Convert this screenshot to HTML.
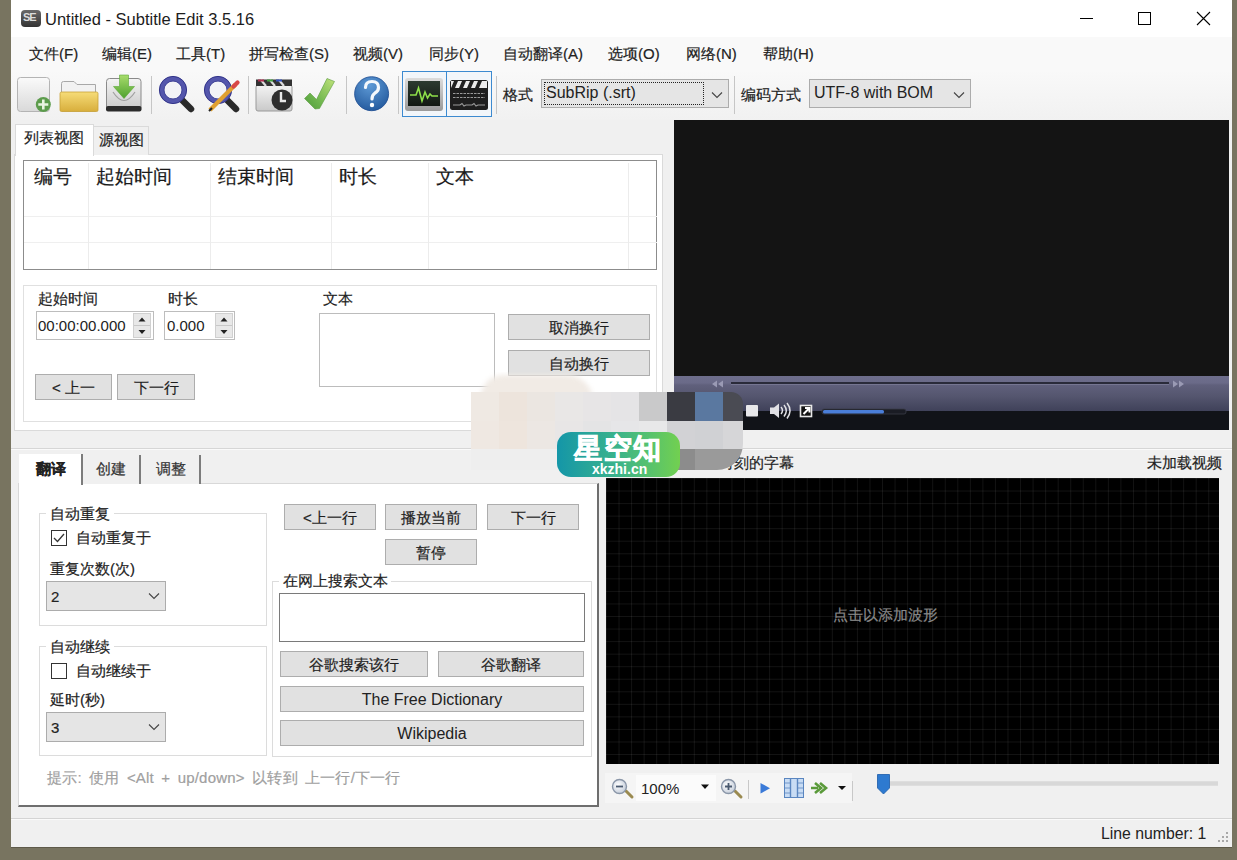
<!DOCTYPE html>
<html><head><meta charset="utf-8">
<style>
html,body{margin:0;padding:0;}
body{width:1237px;height:860px;position:relative;overflow:hidden;background:#787460;font-family:"Liberation Sans",sans-serif;color:#222;}
.a{position:absolute;box-sizing:border-box;}
.t{position:absolute;white-space:nowrap;line-height:1;-webkit-text-stroke:0.2px currentColor;}
.nl{-webkit-text-stroke:0 !important;}
.btn{position:absolute;box-sizing:border-box;background:#e1e1e1;border:1px solid #adadad;text-align:center;font-size:15px;white-space:nowrap;-webkit-text-stroke:0.2px currentColor;color:#1e1e1e;}
.cmb{position:absolute;box-sizing:border-box;background:#e5e5e5;border:1px solid #acacac;font-size:15px;white-space:nowrap;}
.grp{position:absolute;box-sizing:border-box;border:1px solid #dcdcdc;}
.sep{position:absolute;width:1px;background:#c8c8c8;}
</style></head><body>
<!-- window -->
<div class="a" id="win" style="left:11px;top:0;width:1221px;height:848px;background:#f0f0f0;border-bottom:1px solid #5e5a4a;"></div>
<!-- title bar -->
<div class="a" style="left:11px;top:0;width:1221px;height:37px;background:#fff;"></div>
<!-- menu bar -->
<div class="a" style="left:11px;top:37px;width:1221px;height:33px;background:#f9f9f9;"></div>
<!-- toolbar -->
<div class="a" style="left:11px;top:70px;width:1221px;height:50px;background:linear-gradient(#f9f9f9,#f1f1f1);"></div>


<!-- title content -->

<div class="a" style="left:21px;top:10px;width:20px;height:17px;background:linear-gradient(#6a6a6a,#333);border-radius:4px;"></div>
<div class="t nl" style="left:23px;top:12px;font-size:11px;font-weight:bold;color:#ddd;letter-spacing:-1px;">SE</div>
<div class="t nl" id="ttl" style="left:45px;top:11px;font-size:16.5px;color:#1c1c1c;">Untitled - Subtitle Edit 3.5.16</div>
<div class="a" style="left:1080px;top:18px;width:13px;height:1px;background:#000;"></div>
<div class="a" style="left:1138px;top:12px;width:13px;height:13px;border:1px solid #000;"></div>
<svg class="a" style="left:1196px;top:11px" width="15" height="15"><path d="M1 1L14 14M14 1L1 14" stroke="#000" stroke-width="1.1"/></svg>
<!-- menu -->
<div class="t" style="left:29px;top:46px;font-size:15px;">文件(F)</div>
<div class="t" style="left:102px;top:46px;font-size:15px;">编辑(E)</div>
<div class="t" style="left:176px;top:46px;font-size:15px;">工具(T)</div>
<div class="t" style="left:249px;top:46px;font-size:15px;">拼写检查(S)</div>
<div class="t" style="left:353px;top:46px;font-size:15px;">视频(V)</div>
<div class="t" style="left:429px;top:46px;font-size:15px;">同步(Y)</div>
<div class="t" style="left:503px;top:46px;font-size:15px;">自动翻译(A)</div>
<div class="t" style="left:608px;top:46px;font-size:15px;">选项(O)</div>
<div class="t" style="left:686px;top:46px;font-size:15px;">网络(N)</div>
<div class="t" style="left:763px;top:46px;font-size:15px;">帮助(H)</div>


<!-- toolbar icons -->
<svg class="a" style="left:0;top:0" width="1237" height="125">
<defs>
<linearGradient id="gdoc" x1="0" y1="0" x2="0" y2="1"><stop offset="0" stop-color="#fafafa"/><stop offset="1" stop-color="#d9d9d9"/></linearGradient>
<linearGradient id="gfold" x1="0" y1="0" x2="0" y2="1"><stop offset="0" stop-color="#f6dc78"/><stop offset="1" stop-color="#d8ae3c"/></linearGradient>
<linearGradient id="gbox" x1="0" y1="0" x2="0" y2="1"><stop offset="0" stop-color="#f4f4f4"/><stop offset="1" stop-color="#c9c9c9"/></linearGradient>
<linearGradient id="garr" x1="0" y1="0" x2="0" y2="1"><stop offset="0" stop-color="#a8dc6c"/><stop offset="1" stop-color="#4ea12e"/></linearGradient>
<linearGradient id="gchk" x1="1" y1="0" x2="0" y2="1"><stop offset="0" stop-color="#c0e27a"/><stop offset="0.6" stop-color="#72b850"/><stop offset="1" stop-color="#4e9a3a"/></linearGradient>
<radialGradient id="ghelp" cx="0.45" cy="0.25" r="0.8"><stop offset="0" stop-color="#5e9ad6"/><stop offset="1" stop-color="#22589c"/></radialGradient>
<linearGradient id="gmon" x1="0" y1="0" x2="0" y2="1"><stop offset="0" stop-color="#dcdcdc"/><stop offset="1" stop-color="#9a9a9a"/></linearGradient>
<linearGradient id="gscr" x1="0" y1="0" x2="0" y2="1"><stop offset="0" stop-color="#2c3a30"/><stop offset="1" stop-color="#121812"/></linearGradient>
</defs>
<!-- new doc -->
<rect x="17.5" y="77.5" width="32" height="34" rx="3" fill="url(#gdoc)" stroke="#b4b4b4"/>
<circle cx="43.3" cy="104.5" r="7.5" fill="#5c9c4c"/>
<path d="M43.3 99.5V109.5M38.3 104.5H48.3" stroke="#e8f4e0" stroke-width="2.6"/>
<!-- folder -->
<path d="M61.5 111V83.5Q61.5 81.5 63.5 81.5H74L77 84.5H95.5V111Z" fill="#f2f2f2" stroke="#a8a8a8"/>
<rect x="60" y="92" width="38" height="19.5" rx="1.5" fill="url(#gfold)" stroke="#c9a238" stroke-width="0.8"/>
<!-- download -->
<rect x="106.5" y="78.5" width="34.5" height="32" rx="3" fill="url(#gbox)" stroke="#8a8a8a"/>
<rect x="106" y="106" width="35.5" height="5.5" rx="2" fill="#2c2c2c"/>
<path d="M113 92Q124 109 135 92" fill="none" stroke="#a0a0a0" stroke-width="1.2"/>
<path d="M119.5 75H128.5V86.5H134.5L124 98.5L113.5 86.5H119.5Z" fill="url(#garr)" stroke="#5aa838" stroke-width="0.6"/>
<!-- magnifier -->
<path d="M181 99L191 109" stroke="#2a2a2a" stroke-width="6.5" stroke-linecap="round"/>
<circle cx="173" cy="90" r="11.3" fill="#f2f2f6" stroke="#5456ac" stroke-width="5"/>
<circle cx="173" cy="90" r="13.6" fill="none" stroke="#34368a" stroke-width="1"/><circle cx="173" cy="90" r="9" fill="none" stroke="#3a3c90" stroke-width="0.8"/>
<!-- magnifier + pencil -->
<path d="M226 99L236 109" stroke="#2a2a2a" stroke-width="6.5" stroke-linecap="round"/>
<circle cx="218" cy="90" r="11.3" fill="#f2f2f6" stroke="#5456ac" stroke-width="5"/>
<circle cx="218" cy="90" r="13.6" fill="none" stroke="#34368a" stroke-width="1"/><circle cx="218" cy="90" r="9" fill="none" stroke="#3a3c90" stroke-width="0.8"/>
<path d="M210 110L235.5 84.5" stroke="#e0a030" stroke-width="4.2"/>
<path d="M233.5 86.5L237.5 82.5" stroke="#d84848" stroke-width="4.2" stroke-linecap="round"/>
<path d="M209 111L212 108" stroke="#222" stroke-width="2"/>
<!-- clapper clock -->
<rect x="256" y="85" width="36" height="26" rx="2" fill="url(#gbox)" stroke="#9a9a9a"/>
<path d="M256 79.5H292V86H256Z" fill="#333"/>
<path d="M261 80L266 86M270 80L275 86M279 80L284 86" stroke="#ddd" stroke-width="2.2"/>
<path d="M259 80H266M268 80H275M277 80H284" stroke="#c0304a" stroke-width="0"/>
<rect x="258" y="79.5" width="6" height="2" fill="#b03050"/><rect x="267" y="79.5" width="6" height="2" fill="#40a040"/><rect x="276" y="79.5" width="6" height="2" fill="#3050c0"/>
<circle cx="282" cy="100" r="10.5" fill="#2e2e2e"/>
<path d="M281 92V101H286" stroke="#e8e8e8" stroke-width="2.4" fill="none"/>
<!-- check -->
<path d="M327 78.5L334.5 81.5L319.5 108.5L315 109L304.5 98.5L310 93L316.5 99.5Z" fill="url(#gchk)" stroke="#5a9a40" stroke-width="0.6" stroke-linejoin="round"/>
<!-- help -->
<circle cx="371.6" cy="93.7" r="17" fill="url(#ghelp)" stroke="#1a4a90" stroke-width="0.8"/>
<path d="M365.5 87.5Q365.5 81.5 372 81.5Q378.5 81.5 378.5 87.5Q378.5 91 375 93Q372 95 372 99" stroke="#f4f8fc" stroke-width="3.2" fill="none" stroke-linecap="round"/>
<circle cx="372" cy="105" r="2.2" fill="#fff"/>
<!-- pressed buttons -->
<rect x="402.5" y="71.5" width="89" height="45" fill="#f2f6fa" stroke="#3c8ad0"/>
<path d="M446.5 71V117" stroke="#3c8ad0"/>
<rect x="405" y="78" width="38" height="33" rx="3" fill="url(#gmon)"/>
<rect x="408" y="81" width="32" height="25" fill="url(#gscr)"/>
<path d="M410 95H416L418.5 88L422 101L425 92L427.5 98L430 94L432 96H438" stroke="#8ee04a" stroke-width="1.6" fill="none"/>
<rect x="450" y="80" width="38" height="30" rx="2.5" fill="#1e1e1e"/>
<rect x="451" y="81" width="36" height="7" fill="#ececec"/>
<path d="M454 81H458L455 88H451Z M462 81H466L463 88H459Z M470 81H474L471 88H467Z M478 81H482L479 88H475Z" fill="#222"/>
<path d="M453 93.5H485M453 97.5H485" stroke="#9a9a9a" stroke-width="1.2" stroke-dasharray="2.5 1"/>
<path d="M453 105H460L462 103.5L464 106L466 105H472L474 103.5L476 106L478 105H485" stroke="#9a9a9a" stroke-width="1.1" fill="none"/>
<!-- separators -->
<path d="M151.5 76V114M248.5 76V114M346.5 76V114M398.5 76V114M496.5 76V114M734.5 76V114" stroke="#c6c6c6"/>
</svg>
<div class="t" style="left:503px;top:87px;font-size:15px;">格式</div>
<div class="cmb" style="left:541px;top:79px;width:188px;height:29px;"></div>
<div class="a" style="left:544px;top:82px;width:160px;height:23px;border:1px dotted #222;"></div>
<div class="t nl" style="left:546px;top:85px;font-size:16px;color:#222;">SubRip (.srt)</div>
<svg class="a" style="left:711px;top:91px" width="12" height="8"><path d="M1 1.5L6 6.5L11 1.5" stroke="#444" fill="none" stroke-width="1.1"/></svg>
<div class="t" style="left:741px;top:87px;font-size:15px;">编码方式</div>
<div class="cmb" style="left:809px;top:79px;width:162px;height:29px;"></div>
<div class="t nl" style="left:814px;top:85px;font-size:16px;color:#222;">UTF-8 with BOM</div>
<svg class="a" style="left:953px;top:91px" width="12" height="8"><path d="M1 1.5L6 6.5L11 1.5" stroke="#444" fill="none" stroke-width="1.1"/></svg>

<!-- top tabs area -->
<div class="a" style="left:14px;top:154px;width:649px;height:277px;background:#fff;border:1px solid #dadada;"></div>
<div class="a" style="left:93px;top:126px;width:56px;height:29px;background:#f0f0f0;border:1px solid #dadada;border-bottom:none;"></div>
<div class="t" style="left:99px;top:132px;font-size:15px;">源视图</div>
<div class="a" style="left:15px;top:124px;width:79px;height:32px;background:#fff;border:1px solid #dadada;border-bottom:none;"></div>
<div class="t" style="left:24px;top:130px;font-size:15px;">列表视图</div>
<!-- list view -->
<div class="a" style="left:23px;top:160px;width:634px;height:110px;background:#fff;border:1px solid #8c8c8c;"></div>
<div class="a" style="left:24px;top:216px;width:633px;height:1px;background:#efefef;"></div>
<div class="a" style="left:24px;top:242px;width:633px;height:1px;background:#efefef;"></div>
<div class="a" style="left:88px;top:163px;width:1px;height:106px;background:#ececec;"></div>
<div class="a" style="left:210px;top:163px;width:1px;height:106px;background:#ececec;"></div>
<div class="a" style="left:331px;top:163px;width:1px;height:106px;background:#ececec;"></div>
<div class="a" style="left:428px;top:163px;width:1px;height:106px;background:#ececec;"></div>
<div class="a" style="left:628px;top:163px;width:1px;height:106px;background:#ececec;"></div>
<div class="t" style="left:34px;top:168px;font-size:18.5px;color:#1a1a1a;">编号</div>
<div class="t" style="left:96px;top:168px;font-size:18.5px;color:#1a1a1a;">起始时间</div>
<div class="t" style="left:218px;top:168px;font-size:18.5px;color:#1a1a1a;">结束时间</div>
<div class="t" style="left:339px;top:168px;font-size:18.5px;color:#1a1a1a;">时长</div>
<div class="t" style="left:436px;top:168px;font-size:18.5px;color:#1a1a1a;">文本</div>
<!-- edit panel -->
<div class="a" style="left:23px;top:285px;width:634px;height:137px;background:#fff;border:1px solid #e0e0e0;"></div>
<div class="t" style="left:38px;top:291px;font-size:15px;">起始时间</div>
<div class="t" style="left:168px;top:291px;font-size:15px;">时长</div>
<div class="t" style="left:323px;top:291px;font-size:15px;">文本</div>
<div class="a" style="left:36px;top:311px;width:118px;height:29px;background:#fff;border:1px solid #bdbdbd;"></div>
<div class="t nl" style="left:38px;top:318px;font-size:15px;color:#222;">00:00:00.000</div>
<div class="a" style="left:133px;top:313px;width:18px;height:25px;background:#e8e8e8;border:1px solid #d0d0d0;"></div>
<div class="a" style="left:164px;top:311px;width:71px;height:29px;background:#fff;border:1px solid #bdbdbd;"></div>
<div class="t nl" style="left:167px;top:318px;font-size:15px;color:#222;">0.000</div>
<div class="a" style="left:215px;top:313px;width:18px;height:25px;background:#e8e8e8;border:1px solid #d0d0d0;"></div>
<svg class="a" style="left:0;top:300px" width="240" height="50">
<path d="M138.5 21.5L142 17.5L145.5 21.5Z M138.5 30L142 34L145.5 30Z M220.5 21.5L224 17.5L227.5 21.5Z M220.5 30L224 34L227.5 30Z" fill="#222"/>
<path d="M134 25.5H150M216 25.5H232" stroke="#c8c8c8"/>
</svg>
<div class="a" style="left:319px;top:313px;width:176px;height:74px;background:#fff;border:1px solid #bcbcbc;"></div>
<div class="btn" style="left:508px;top:314px;width:142px;height:26px;line-height:26px;">取消换行</div>
<div class="btn" style="left:508px;top:350px;width:142px;height:26px;line-height:26px;">自动换行</div>
<div class="btn" style="left:35px;top:374px;width:77px;height:26px;line-height:26px;">&lt; 上一</div>
<div class="btn" style="left:117px;top:374px;width:78px;height:26px;line-height:26px;">下一行</div>


<!-- video panel -->
<div class="a" style="left:674px;top:120px;width:555px;height:310px;background:#141414;"></div>
<div class="a" style="left:674px;top:376px;width:555px;height:36px;background:linear-gradient(#6e6e8c 0px,#6a6a88 7px,#60607c 9px,#55566f 20px,#3e4058 36px);"></div>
<div class="a" style="left:674px;top:411px;width:555px;height:19px;background:#111318;"></div>
<div class="a" style="left:731px;top:382px;width:438px;height:3px;background:#2a2b3a;border-bottom:1px solid #767692;"></div>
<svg class="a" style="left:700px;top:378px" width="520" height="45">
<path d="M12 6L17 2.5V9.5Z M18 6L23 2.5V9.5Z" fill="#9a9ab4"/>
<path d="M473 2.5L478 6L473 9.5Z M479 2.5L484 6L479 9.5Z" fill="#9a9ab4"/>
<rect x="46" y="27" width="12" height="11.5" fill="#e8e8ea" rx="1"/>
<path d="M70 29.5H74L79 25.5V40L74 36H70Z" fill="#e0e0e4"/>
<path d="M81 29Q84 32.5 81 36M84 27Q88.5 32.5 84 38.5M87 25Q93 32.5 87 40.5" stroke="#e0e0e4" stroke-width="1.5" fill="none"/>
<rect x="100.5" y="27.5" width="11" height="11" fill="#111" stroke="#e8e8e8" stroke-width="1.6"/>
<path d="M103.5 36L109 30.5M105 30H109.5V34.5" stroke="#fff" stroke-width="2" fill="none"/>
<rect x="122" y="31" width="84" height="5" rx="2" fill="#1a1c24" stroke="#3a3c48" stroke-width="0.8"/>
<rect x="123" y="32" width="61" height="3.5" rx="1.5" fill="#4a7ed8"/>
</svg>

<!-- lower tab page -->
<div class="a" style="left:11px;top:448px;width:1221px;height:1px;background:#d6d6d6;"></div>
<div class="a" style="left:11px;top:449px;width:1221px;height:1px;background:#fafafa;"></div>
<div class="a" style="left:18px;top:483px;width:581px;height:324px;background:#fff;border:1px solid #d8d8d8;border-right:2px solid #6e6e6e;border-bottom:2px solid #6e6e6e;"></div>
<div class="a" style="left:83px;top:455px;width:58px;height:29px;background:#f0f0f0;border-right:2px solid #7c7c7c;"></div>
<div class="a" style="left:141px;top:455px;width:60px;height:29px;background:#f0f0f0;border-right:2px solid #7c7c7c;"></div>
<div class="a" style="left:19px;top:454px;width:64px;height:31px;background:#fff;border-right:2px solid #7c7c7c;"></div>
<div class="t" style="left:36px;top:461px;font-size:15px;font-weight:bold;color:#222;">翻译</div>
<div class="t" style="left:96px;top:461px;font-size:15px;color:#333;">创建</div>
<div class="t" style="left:156px;top:461px;font-size:15px;color:#333;">调整</div>
<!-- group auto repeat -->
<div class="grp" style="left:39px;top:513px;width:228px;height:113px;"></div>
<div class="a" style="left:46px;top:506px;width:68px;height:14px;background:#fff;"></div>
<div class="t" style="left:50px;top:506px;font-size:15px;color:#222;">自动重复</div>
<div class="a" style="left:51px;top:530px;width:16px;height:16px;border:1px solid #333;background:#fff;"></div>
<svg class="a" style="left:51px;top:530px" width="16" height="16"><path d="M3 8L6.5 11.5L13 4" stroke="#333" stroke-width="1.3" fill="none"/></svg>
<div class="t" style="left:76px;top:530px;font-size:15px;color:#222;">自动重复于</div>
<div class="t" style="left:50px;top:561px;font-size:15px;color:#222;">重复次数(次)</div>
<div class="cmb" style="left:46px;top:581px;width:120px;height:30px;"></div>
<div class="t" style="left:51px;top:589px;font-size:15px;color:#222;">2</div>
<svg class="a" style="left:148px;top:592px" width="12" height="8"><path d="M1 1.5L6 6.5L11 1.5" stroke="#444" fill="none" stroke-width="1.1"/></svg>
<!-- group auto continue -->
<div class="grp" style="left:39px;top:646px;width:228px;height:110px;"></div>
<div class="a" style="left:46px;top:639px;width:68px;height:14px;background:#fff;"></div>
<div class="t" style="left:50px;top:639px;font-size:15px;color:#222;">自动继续</div>
<div class="a" style="left:51px;top:663px;width:16px;height:16px;border:1px solid #333;background:#fff;"></div>
<div class="t" style="left:76px;top:663px;font-size:15px;color:#222;">自动继续于</div>
<div class="t" style="left:50px;top:692px;font-size:15px;color:#222;">延时(秒)</div>
<div class="cmb" style="left:46px;top:712px;width:120px;height:30px;"></div>
<div class="t" style="left:51px;top:720px;font-size:15px;color:#222;">3</div>
<svg class="a" style="left:148px;top:723px" width="12" height="8"><path d="M1 1.5L6 6.5L11 1.5" stroke="#444" fill="none" stroke-width="1.1"/></svg>
<div class="t" style="left:47px;top:770px;font-size:15px;color:#a0a0a0;word-spacing:3px;letter-spacing:0.2px;">提示: 使用 &lt;Alt + up/down&gt; 以转到 上一行/下一行</div>
<!-- right side buttons -->
<div class="btn" style="left:284px;top:504px;width:92px;height:26px;line-height:26px;">&lt;上一行</div>
<div class="btn" style="left:385px;top:504px;width:92px;height:26px;line-height:26px;">播放当前</div>
<div class="btn" style="left:487px;top:504px;width:92px;height:26px;line-height:26px;">下一行</div>
<div class="btn" style="left:385px;top:539px;width:92px;height:26px;line-height:26px;">暂停</div>
<div class="grp" style="left:272px;top:581px;width:320px;height:176px;"></div>
<div class="a" style="left:279px;top:574px;width:112px;height:14px;background:#fff;"></div>
<div class="t" style="left:283px;top:573px;font-size:15px;color:#222;">在网上搜索文本</div>
<div class="a" style="left:279px;top:593px;width:306px;height:49px;background:#fff;border:1px solid #7a7a7a;"></div>
<div class="btn" style="left:280px;top:651px;width:148px;height:26px;line-height:26px;">谷歌搜索该行</div>
<div class="btn" style="left:438px;top:651px;width:146px;height:26px;line-height:26px;">谷歌翻译</div>
<div class="btn nl" style="left:280px;top:686px;width:304px;height:26px;line-height:26px;font-size:16px;color:#222;">The Free Dictionary</div>
<div class="btn nl" style="left:280px;top:720px;width:304px;height:26px;line-height:26px;font-size:16px;color:#222;">Wikipedia</div>

<!-- waveform -->
<div class="a" style="left:606px;top:478px;width:613px;height:286px;background-color:#000;background-image:linear-gradient(90deg,rgba(255,255,255,0.075) 1px,transparent 1px),linear-gradient(rgba(255,255,255,0.075) 1px,transparent 1px);background-size:12.55px 12.55px;background-position:0px 0px;"></div>
<div class="t" style="left:833px;top:607px;font-size:15px;color:#8a8a8a;">点击以添加波形</div>
<div class="t" style="left:659px;top:455px;font-size:15px;color:#222;">显示当前时刻的字幕</div>
<div class="t" style="left:1147px;top:455px;font-size:15px;color:#222;">未加载视频</div>
<!-- waveform toolbar -->
<div class="a" style="left:605px;top:773px;width:247px;height:30px;background:#f5f5f5;"></div>
<div class="a" style="left:636px;top:775px;width:80px;height:26px;background:#fbfbfb;"></div>
<svg class="a" style="left:600px;top:770px" width="630" height="40">
<defs><radialGradient id="gzm" cx="0.4" cy="0.4" r="0.6"><stop offset="0" stop-color="#fff"/><stop offset="1" stop-color="#c8d0dc"/></radialGradient></defs>
<path d="M26 21L32 27" stroke="#9a8a50" stroke-width="3" stroke-linecap="round"/>
<circle cx="19.5" cy="16.5" r="7" fill="url(#gzm)" stroke="#8a96a8" stroke-width="1.4"/>
<path d="M16 16.5H23" stroke="#4a5a70" stroke-width="1.8"/>
<path d="M101 14.5H109L105 19Z" fill="#111"/>
<path d="M135 21L141 27" stroke="#9a8a50" stroke-width="3" stroke-linecap="round"/>
<circle cx="128.5" cy="16.5" r="7" fill="url(#gzm)" stroke="#8a96a8" stroke-width="1.4"/>
<path d="M125 16.5H132M128.5 13V20" stroke="#4a5a70" stroke-width="1.8"/>
<path d="M148.5 10V29" stroke="#c8c8c8"/>
<path d="M160.5 13L170 18.3L160.5 23.6Z" fill="#3a7ad8"/>
<rect x="184.5" y="8.5" width="19" height="19" fill="#c8dcf4" stroke="#5a86c0"/>
<path d="M190.5 8.5V27.5M197.5 8.5V27.5" stroke="#5a86c0" stroke-width="1.4"/>
<path d="M184.5 13H190.5M184.5 18H190.5M184.5 23H190.5M197.5 13H203.5M197.5 18H203.5M197.5 23H203.5" stroke="#5a86c0" stroke-width="0.8"/>
<path d="M211 18H218M215 13L221 18L215 23M220 13L226 18L220 23" stroke="#5a9a3a" stroke-width="2.6" fill="none"/>
<path d="M238 16H246L242 20Z" fill="#111"/>
<path d="M252.5 11V31" stroke="#c8c8c8"/>
<rect x="290" y="11" width="1" height="1" fill="none"/>
<path d="M290 13.5H618" stroke="#d8d8d8" stroke-width="4.5"/>
<path d="M277.5 4.5H289.5V18L283.5 24L277.5 18Z" fill="#2e7ad0" stroke="#1a5aa8" stroke-width="0.8"/>
</svg>
<div class="t nl" style="left:641px;top:781px;font-size:15px;color:#222;">100%</div>
<!-- status bar -->
<div class="a" style="left:11px;top:818px;width:1221px;height:1px;background:#d4d4d4;"></div>
<div class="a" style="left:11px;top:819px;width:1221px;height:1px;background:#fafafa;"></div>
<div class="t nl" style="left:1101px;top:826px;font-size:15.8px;color:#222;">Line number: 1</div>
<svg class="a" style="left:1215px;top:830px" width="16" height="16">
<g fill="#a8a8a8"><rect x="11" y="2" width="2" height="2"/><rect x="7" y="6" width="2" height="2"/><rect x="11" y="6" width="2" height="2"/><rect x="3" y="10" width="2" height="2"/><rect x="7" y="10" width="2" height="2"/><rect x="11" y="10" width="2" height="2"/></g>
</svg>


<!-- mosaic overlay -->
<div class="a" style="left:471px;top:372px;width:272px;height:98px;border-radius:0 0 26px 0;overflow:hidden;">
<div class="a" style="left:10px;top:3px;width:112px;height:30px;background:#f1ebe5;border-radius:22px 26px 0 0;filter:blur(2.5px);"></div>
<div class="a" style="left:0;top:20px;width:28px;height:29px;background:#efe9e3;"></div>
<div class="a" style="left:28px;top:20px;width:28px;height:29px;background:#ede4dc;"></div>
<div class="a" style="left:56px;top:20px;width:28px;height:29px;background:#ebe6e1;"></div>
<div class="a" style="left:84px;top:20px;width:28px;height:29px;background:#e9e7e6;"></div>
<div class="a" style="left:112px;top:20px;width:28px;height:29px;background:#e7e5e6;"></div>
<div class="a" style="left:140px;top:20px;width:28px;height:29px;background:#e5e4e6;"></div>
<div class="a" style="left:168px;top:20px;width:28px;height:29px;background:#c9c9ca;"></div>
<div class="a" style="left:196px;top:20px;width:28px;height:29px;background:#3a3b42;"></div>
<div class="a" style="left:224px;top:20px;width:28px;height:29px;background:#5a78a0;"></div>
<div class="a" style="left:252px;top:20px;width:20px;height:29px;background:#4a4b53;border-top-right-radius:12px;"></div>
<div class="a" style="left:0;top:49px;width:28px;height:28px;background:#efe8e2;"></div>
<div class="a" style="left:28px;top:49px;width:28px;height:28px;background:#eee5dd;"></div>
<div class="a" style="left:56px;top:49px;width:28px;height:28px;background:#ece7e3;"></div>
<div class="a" style="left:84px;top:49px;width:28px;height:28px;background:#e8e6e6;"></div>
<div class="a" style="left:112px;top:49px;width:28px;height:28px;background:#e4e4e5;"></div>
<div class="a" style="left:140px;top:49px;width:28px;height:28px;background:#e6e6e8;"></div>
<div class="a" style="left:168px;top:49px;width:28px;height:28px;background:#e8e8e9;"></div>
<div class="a" style="left:196px;top:49px;width:28px;height:28px;background:#d2d2d5;"></div>
<div class="a" style="left:224px;top:49px;width:28px;height:28px;background:#d0d1d4;"></div>
<div class="a" style="left:252px;top:49px;width:20px;height:28px;background:#d6d6d8;"></div>
<div class="a" style="left:0;top:77px;width:196px;height:21px;background:#eeeeee;"></div>
<div class="a" style="left:196px;top:77px;width:28px;height:21px;background:#8c8c8c;"></div>
<div class="a" style="left:224px;top:77px;width:48px;height:21px;background:#9a9a9a;"></div>
</div>
<!-- watermark -->
<div class="a" style="left:557px;top:432px;width:123px;height:45px;border-radius:14px;background:linear-gradient(90deg,#1496a8,#3cb48a 50%,#72d050);"></div>
<div class="t" id="wm" style="left:574px;top:435px;font-size:28px;font-weight:900;color:#fff;letter-spacing:1.5px;-webkit-text-stroke:0.8px #fff;">星空知</div>
<div class="t nl" style="left:592px;top:462px;font-size:14px;font-weight:bold;color:#fff;">xkzhi.cn</div>
</body></html>
